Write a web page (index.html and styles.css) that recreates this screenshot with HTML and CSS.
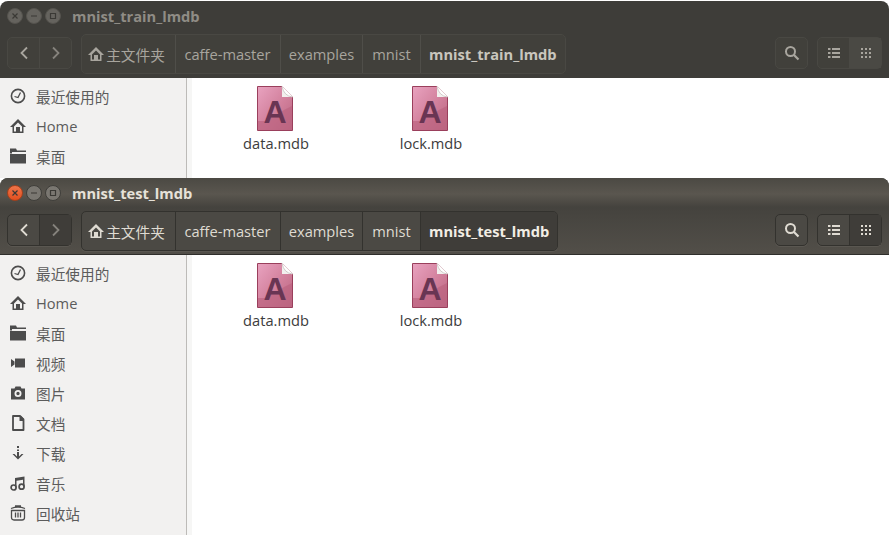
FILE: index.html
```html
<!DOCTYPE html>
<html lang="zh">
<head>
<meta charset="utf-8">
<title>mnist_test_lmdb</title>
<link rel="stylesheet" href="styles.css">
</head>
<body>
<svg class="defs" width="0" height="0" aria-hidden="true">
  <defs>
    <linearGradient id="docg" x1="0" y1="0" x2="1" y2="1">
      <stop offset="0" stop-color="#e9a3c0"/>
      <stop offset="0.55" stop-color="#d17f9b"/>
      <stop offset="1" stop-color="#b9657f"/>
    </linearGradient>
    <symbol id="doc" viewBox="0 0 36 45">
      <path d="M.5.5H25L35.500 11V44.500H.5Z" fill="url(#docg)" stroke="#9a3f5c"/>
      <path d="M1 44V35H9V32H14V29H20L27 24 35 20V44Z" fill="#bc6480" opacity=".7"/>
      <path d="M25 0L36 11H25Z" fill="#f2f0ee"/>
      <path d="M25 .5Q27 10 35.500 11" fill="#fff" stroke="#cfcac8"/>
      <text x="18" y="37" text-anchor="middle" class="doc-letter">A</text>
    </symbol>
    <symbol id="i-home" viewBox="0 0 16 16">
      <path d="M8 1L0 9H2.500V15H13.500V9H16Z M4 8.500L8 4.500 12 8.500V13.500H10V9H6V13.500H4Z" fill="currentColor" fill-rule="evenodd"/>
    </symbol>
    <symbol id="i-recent" viewBox="0 0 16 16">
      <circle cx="8" cy="8" r="6.600" fill="none" stroke="currentColor" stroke-width="1.600"/>
      <path d="M4.500 8.500L8 9.500 10.500 4.500" fill="none" stroke="currentColor" stroke-width="1.300"/>
    </symbol>
    <symbol id="i-folder" viewBox="0 0 16 16">
      <path d="M0 .500H6L7 2.500H16V4H2V5.500H0Z M0 6H16V15.500H0Z" fill="currentColor"/>
    </symbol>
    <symbol id="i-video" viewBox="0 0 16 16">
      <path d="M1 4L4.500 6.500V9.500L1 12Z M5 3.500H15V12.500H5Z" fill="currentColor"/>
    </symbol>
    <symbol id="i-photo" viewBox="0 0 16 16">
      <path d="M1 3.500H4.500L5.500 1.500H10.500L11.500 3.500H15V14.500H1Z M8 5A3.500 3.500 0 1 0 8 12 3.500 3.500 0 1 0 8 5Z M8 6.800A1.700 1.700 0 1 1 8 10.200 1.700 1.700 0 1 1 8 6.800Z" fill="currentColor" fill-rule="evenodd"/>
    </symbol>
    <symbol id="i-file" viewBox="0 0 16 16">
      <path d="M3 1H10L13.500 4.500V15H3Z" fill="none" stroke="currentColor" stroke-width="1.800" stroke-linejoin="round"/>
      <path d="M9.500 1H11L14 4V6H9.500Z" fill="currentColor"/>
    </symbol>
    <symbol id="i-down" viewBox="0 0 16 16">
      <path d="M7 1H9V3H7Z M7 4.500H9V6H7Z M7 7H9V11.500L11.500 9H13.500L8 14.500 2.500 9H4.500L7 11.500Z" fill="currentColor"/>
    </symbol>
    <symbol id="i-music" viewBox="0 0 16 16">
      <path d="M5 3L14.500 1.500V11.500H13V4.800L6.500 5.800V12.500H5Z" fill="currentColor"/>
      <circle cx="3.600" cy="12.500" r="2.500" fill="none" stroke="currentColor" stroke-width="1.700"/>
      <circle cx="11.600" cy="11.700" r="2.500" fill="none" stroke="currentColor" stroke-width="1.700"/>
    </symbol>
    <symbol id="i-trash" viewBox="0 0 16 16">
      <path d="M5 1H11M1 3.500Q8 .800 15 3.500" fill="none" stroke="currentColor" stroke-width="1.300"/>
      <path d="M1.500 5.500H14.500V12.500Q14.500 15 12 15H4Q1.500 15 1.500 12.500Z M5.500 7.500V12.500M8 7.500V12.500M10.500 7.500V12.500" fill="none" stroke="currentColor" stroke-width="1.300"/>
    </symbol>
    <symbol id="i-search" viewBox="0 0 16 16">
      <circle cx="6.500" cy="6.500" r="4.500" fill="none" stroke="currentColor" stroke-width="2"/>
      <path d="M10 10L14.500 14.500" stroke="currentColor" stroke-width="2.200"/>
    </symbol>
    <symbol id="i-list" viewBox="0 0 12 12">
      <path d="M0 1H2.500V3H0Z M4 1H12V3H4Z M0 5H2.500V7H0Z M4 5H12V7H4Z M0 9H2.500V11H0Z M4 9H12V11H4Z" fill="currentColor"/>
    </symbol>
    <symbol id="i-grid" viewBox="0 0 12 12">
      <path d="M1 1H3V3H1Z M5 1H7V3H5Z M9 1H11V3H9Z M1 5H3V7H1Z M5 5H7V7H5Z M9 5H11V7H9Z M1 9H3V11H1Z M5 9H7V11H5Z M9 9H11V11H9Z" fill="currentColor"/>
    </symbol>
  </defs>
</svg>

<section class="window back">
  <header class="head">
    <div class="titlebar">
      <div class="controls">
        <span class="ctl"><svg viewBox="0 0 8 8"><path d="M1.500 1.500L6.500 6.500M6.500 1.500L1.500 6.500"/></svg></span>
        <span class="ctl"><svg viewBox="0 0 8 8"><path d="M1 4H7"/></svg></span>
        <span class="ctl"><svg viewBox="0 0 8 8"><path d="M1.500 1.500H6.500V6.500H1.500Z"/></svg></span>
      </div>
      <h1 class="title">mnist_train_lmdb</h1>
    </div>
    <div class="toolbar">
      <div class="group nav">
        <span class="btn"><svg class="chev" viewBox="0 0 10 14"><path d="M8 1.500L2.500 7 8 12.500"/></svg></span>
        <span class="btn dim"><svg class="chev" viewBox="0 0 10 14"><path d="M2 1.500L7.500 7 2 12.500"/></svg></span>
      </div>
      <div class="group path">
        <span class="crumb c-home"><svg class="hicon"><use href="#i-home"/></svg>主文件夹</span>
        <span class="crumb c-caffe">caffe-master</span>
        <span class="crumb c-ex">examples</span>
        <span class="crumb c-mn">mnist</span>
        <span class="crumb current">mnist_train_lmdb</span>
      </div>
      <div class="tools">
        <div class="group"><span class="btn"><svg class="ticon"><use href="#i-search"/></svg></span></div>
        <div class="group">
          <span class="btn"><svg class="ticon small"><use href="#i-list"/></svg></span>
          <span class="btn on"><svg class="ticon small"><use href="#i-grid"/></svg></span>
        </div>
      </div>
    </div>
  </header>
  <div class="body">
    <nav class="sidebar">
      <a class="place"><svg class="picon"><use href="#i-recent"/></svg>最近使用的</a>
      <a class="place"><svg class="picon"><use href="#i-home"/></svg>Home</a>
      <a class="place"><svg class="picon"><use href="#i-folder"/></svg>桌面</a>
    </nav>
    <main class="files">
      <div class="file"><svg class="doc"><use href="#doc"/></svg><span>data.mdb</span></div>
      <div class="file"><svg class="doc"><use href="#doc"/></svg><span>lock.mdb</span></div>
    </main>
  </div>
</section>

<section class="window front">
  <header class="head">
    <div class="titlebar">
      <div class="controls">
        <span class="ctl close"><svg viewBox="0 0 8 8"><path d="M1.500 1.500L6.500 6.500M6.500 1.500L1.500 6.500"/></svg></span>
        <span class="ctl"><svg viewBox="0 0 8 8"><path d="M1 4H7"/></svg></span>
        <span class="ctl"><svg viewBox="0 0 8 8"><path d="M1.500 1.500H6.500V6.500H1.500Z"/></svg></span>
      </div>
      <h1 class="title">mnist_test_lmdb</h1>
    </div>
    <div class="toolbar">
      <div class="group nav">
        <span class="btn"><svg class="chev" viewBox="0 0 10 14"><path d="M8 1.500L2.500 7 8 12.500"/></svg></span>
        <span class="btn dim on"><svg class="chev" viewBox="0 0 10 14"><path d="M2 1.500L7.500 7 2 12.500"/></svg></span>
      </div>
      <div class="group path">
        <span class="crumb c-home"><svg class="hicon"><use href="#i-home"/></svg>主文件夹</span>
        <span class="crumb c-caffe">caffe-master</span>
        <span class="crumb c-ex">examples</span>
        <span class="crumb c-mn">mnist</span>
        <span class="crumb current">mnist_test_lmdb</span>
      </div>
      <div class="tools">
        <div class="group"><span class="btn"><svg class="ticon"><use href="#i-search"/></svg></span></div>
        <div class="group">
          <span class="btn"><svg class="ticon small"><use href="#i-list"/></svg></span>
          <span class="btn on"><svg class="ticon small"><use href="#i-grid"/></svg></span>
        </div>
      </div>
    </div>
  </header>
  <div class="body">
    <nav class="sidebar">
      <a class="place"><svg class="picon"><use href="#i-recent"/></svg>最近使用的</a>
      <a class="place"><svg class="picon"><use href="#i-home"/></svg>Home</a>
      <a class="place"><svg class="picon"><use href="#i-folder"/></svg>桌面</a>
      <a class="place"><svg class="picon"><use href="#i-video"/></svg>视频</a>
      <a class="place"><svg class="picon"><use href="#i-photo"/></svg>图片</a>
      <a class="place"><svg class="picon"><use href="#i-file"/></svg>文档</a>
      <a class="place"><svg class="picon"><use href="#i-down"/></svg>下载</a>
      <a class="place"><svg class="picon"><use href="#i-music"/></svg>音乐</a>
      <a class="place"><svg class="picon"><use href="#i-trash"/></svg>回收站</a>
    </nav>
    <main class="files">
      <div class="file"><svg class="doc"><use href="#doc"/></svg><span>data.mdb</span></div>
      <div class="file"><svg class="doc"><use href="#doc"/></svg><span>lock.mdb</span></div>
    </main>
  </div>
</section>
</body>
</html>
```
FILE: styles.css
```css
* { box-sizing: border-box; }
html, body { margin: 0; height: 100%; }
body {
  background: #fff;
  overflow: hidden;
  position: relative;
  font-family: "Open Sans", "Noto Sans CJK SC", sans-serif;
  font-size: 14.67px;
}
.defs { position: absolute; }
.doc-letter { font: bold 32px "Liberation Sans", sans-serif; fill: #693553; }

.window {
  position: absolute;
  left: 0;
  width: 889px;
  overflow: hidden;
  display: flex;
  flex-direction: column;
  background: #fff;
  border-radius: 8px 8px 0 0;
}
.back { top: 1px; height: 177px; }
.front { top: 178px; height: 357px; }

.head { height: 77px; flex: none; background: #3e3d39; color: #a8a59e; }
.front .head {
  background: linear-gradient(#3c3b37, #514e48 96%);
  color: #dfdbd2;
  border-bottom: 1px solid #2f2e2b;
}
.titlebar {
  height: 29px;
  display: flex;
  align-items: center;
  padding-left: 7px;
}
.front .titlebar { background: linear-gradient(#4b4943, #5a564f 55%, #45433e); }
.controls { display: flex; gap: 3px; }
.ctl {
  width: 16px;
  height: 16px;
  border-radius: 50%;
  background: #65635e;
  border: 1px solid #55534e;
  display: flex;
  align-items: center;
  justify-content: center;
}
.front .ctl { background: #7a7771; border-color: #3f3e3a; }
.ctl svg { width: 8px; height: 8px; fill: none; stroke: #3a3935; stroke-width: 1.200; }
.ctl.close { background: linear-gradient(#f0754a, #e04f1f); border-color: #a5401c; }
.title {
  margin: 0 0 0 11px;
  font-size: 14.67px;
  font-weight: 700;
  color: #8f8c85;
}
.front .title { color: #e6e2d9; }

.toolbar {
  height: 48px;
  display: flex;
  align-items: flex-start;
  padding: 7px 7px 0;
}
.group {
  display: flex;
  height: 32px;
  border: 1px solid #494843;
  border-radius: 5px;
  background: #41403b;
}
.front .group { border-color: #33322e; background: #4b4944; box-shadow: 0 1px 0 #5a5751; }
.btn {
  width: 31px;
  display: flex;
  align-items: center;
  justify-content: center;
}
.btn + .btn { width: 32px; border-left: 1px solid #4a4944; }
.front .btn + .btn { border-left-color: #33322e; }
.btn.on { background: #4a4944; }
.front .btn.on { background: #3f3d39; }
.chev { width: 10px; height: 14px; fill: none; stroke: currentColor; stroke-width: 1.800; }
.btn.dim { color: #85827c; }

.path {
  margin-left: 9px;
  height: 40px;
  margin-top: -3px;
}
.crumb {
  display: flex;
  align-items: center;
  justify-content: center;
  border-right: 1px solid #4f4e49;
  white-space: nowrap;
}
.front .crumb { border-right-color: #33322e; }
.c-home { width: 94px; padding-right: 4px; }
.c-caffe { width: 105px; padding-right: 1px; }
.c-ex { width: 82px; }
.c-mn { width: 58px; }
.current { border-right: 0; padding: 0 8px; font-weight: 700; color: #c9c6be; }
.front .current { color: #f2eee5; background: #3f3d39; border-radius: 0 4px 4px 0; }
.hicon { width: 16px; height: 16px; margin-right: 2px; flex: none; }
.tools { margin-left: auto; display: flex; gap: 9px; }
.ticon { width: 16px; height: 16px; }
.ticon.small { width: 12px; height: 12px; }

.body { flex: 1; display: flex; min-height: 0; }
.sidebar {
  width: 187px;
  flex: none;
  background: #f2f1f0;
  border-right: 1px solid #bdbbb8;
  padding-top: 3px;
}
.place {
  height: 30px;
  display: flex;
  align-items: center;
  padding-left: 10px;
  color: #5c5c5c;
}
.picon { width: 16px; height: 16px; margin-right: 10px; color: #4c4c4c; flex: none; }
.files {
  flex: 1;
  display: flex;
  align-items: flex-start;
  padding: 8px 0 0 5px;
  border-left: 5px solid #f6f6f5;
}
.file {
  width: 155px;
  display: flex;
  flex-direction: column;
  align-items: center;
  color: #3c3c3c;
}
.doc { width: 36px; height: 45px; }
.file span { margin: 2px 0 0 3px; line-height: 20px; }
```
